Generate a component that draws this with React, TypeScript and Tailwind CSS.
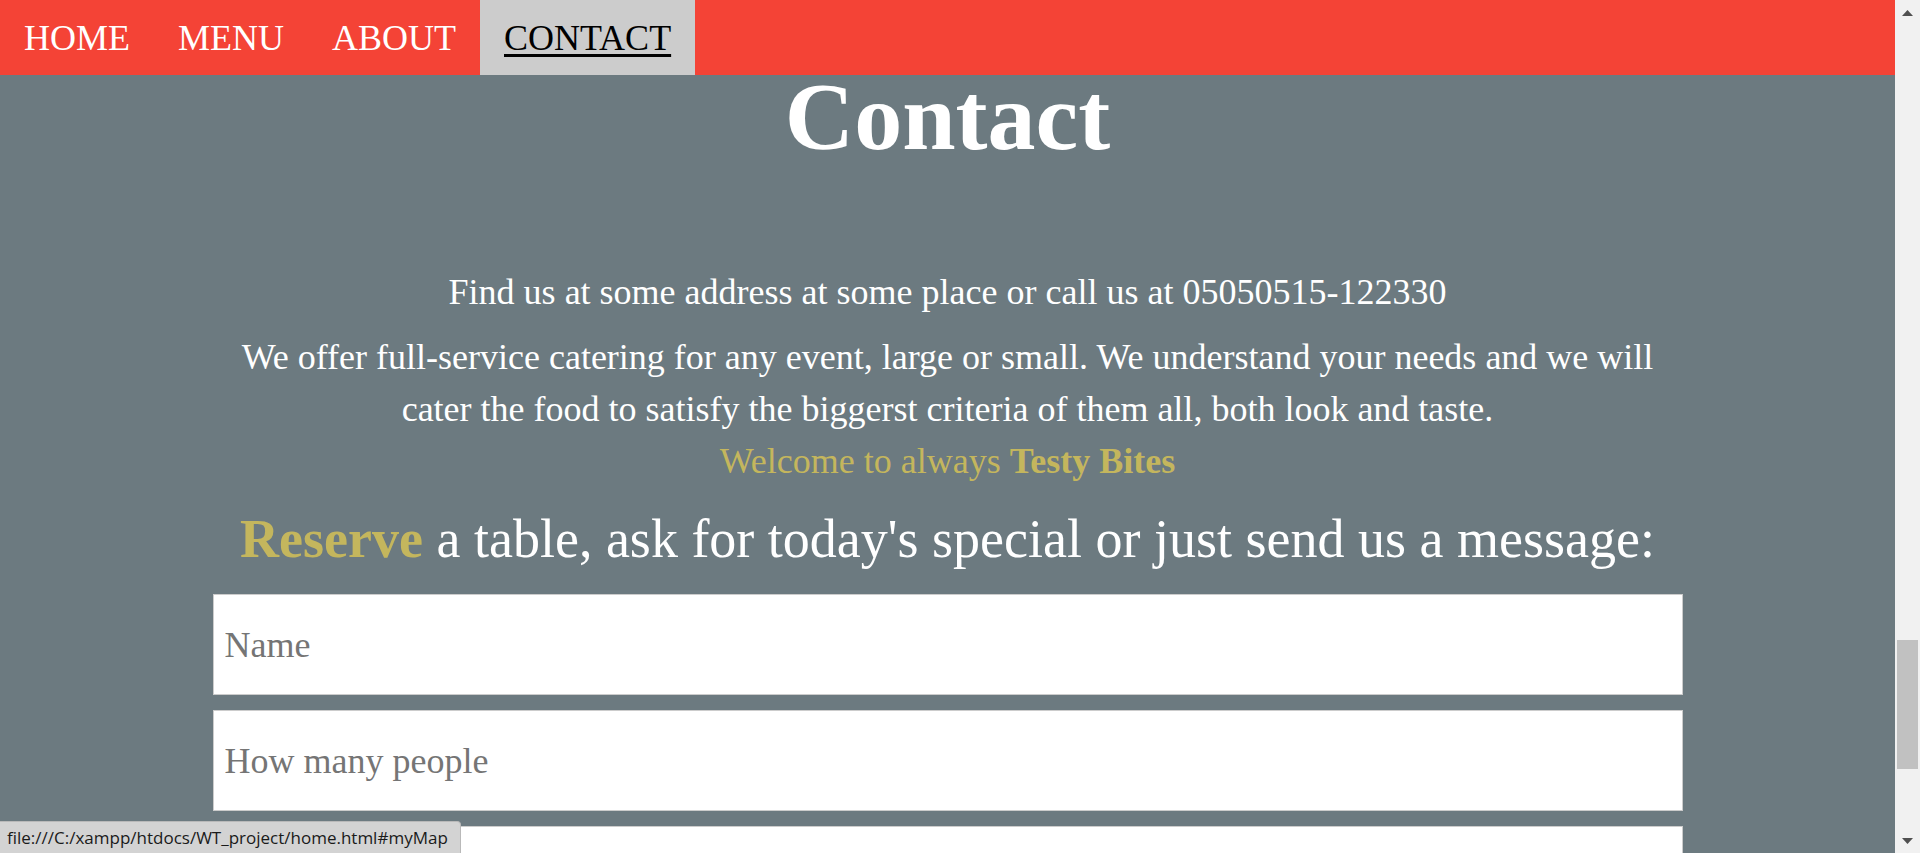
import React from "react";

const navItems = ["HOME", "MENU", "ABOUT", "CONTACT"];

function NavBar({ active }: { active: string }) {
  return (
    <nav className="flex h-[75px] shrink-0 bg-[#f44336]">
      {navItems.map((item) => (
        <a
          key={item}
          href={"#" + item.toLowerCase()}
          className={
            item === active
              ? "flex items-center bg-[#cccccc] px-[24px] text-[36px] text-black underline decoration-[3px] underline-offset-[4px]"
              : "flex items-center px-[24px] text-[36px] text-white no-underline"
          }
        >
          {item}
        </a>
      ))}
    </nav>
  );
}

function Field({ placeholder }: { placeholder: string }) {
  return (
    <input
      type="text"
      placeholder={placeholder}
      className="block h-[101px] w-full border border-[#cccccc] bg-white px-[11px] text-[36px] text-black outline-none placeholder:text-[#757575]"
    />
  );
}

function Scrollbar() {
  return (
    <div className="flex w-[25px] shrink-0 flex-col bg-[#f1f1f1]">
      <div className="flex h-[25px] items-center justify-center">
        <svg width="11" height="6" viewBox="0 0 11 6">
          <path d="M5.5 0 L11 6 L0 6 Z" fill="#505050" />
        </svg>
      </div>
      <div className="flex-1 px-[2px]">
        <div className="mt-[615px] h-[129px] w-full bg-[#c1c1c1]" />
      </div>
      <div className="flex h-[25px] items-center justify-center">
        <svg width="11" height="6" viewBox="0 0 11 6">
          <path d="M0 0 L11 0 L5.5 6 Z" fill="#505050" />
        </svg>
      </div>
    </div>
  );
}

export default function App() {
  return (
    <div className="relative flex h-[853px] w-full overflow-hidden bg-[#6c7a80] font-['Liberation_Serif',serif]">
      <div className="flex min-w-0 flex-1 flex-col">
        <NavBar active="CONTACT" />
        <main className="flex-1 overflow-hidden">
          <div className="mx-auto w-[1470px] text-center text-white">
            <h1 className="text-[96px] leading-[83px] font-bold">Contact</h1>
            <p className="mt-[108px] text-[36px] leading-[52px]">
              Find us at some address at some place or call us at 05050515-122330
            </p>
            <p className="mt-[13px] text-[36px] leading-[52px]">
              We offer full-service catering for any event, large or small. We
              understand your needs and we will cater the food to satisfy the
              biggerst criteria of them all, both look and taste.
              <br />
              <span className="text-[#c4b65d]">
                Welcome to always <b>Testy Bites</b>
              </span>
            </p>
            <p className="mt-[17px] text-[54px] leading-[70px]">
              <b className="text-[#c4b65d]">Reserve</b> a table, ask for today's
              special or just send us a message:
            </p>
            <form className="mt-[20px] flex flex-col gap-[15px] text-left">
              <Field placeholder="Name" />
              <Field placeholder="How many people" />
              <Field placeholder="Date and time" />
            </form>
          </div>
        </main>
      </div>
      <Scrollbar />
      <div className="absolute bottom-0 left-0 flex h-[32px] items-center rounded-tr-[4px] border-t border-r border-[#b9b9b9] bg-[#d3d3d3] pl-[7px] pr-[12px] font-['Open_Sans',sans-serif] text-[17px] text-[#1a1a1a]">
        file:///C:/xampp/htdocs/WT_project/home.html#myMap
      </div>
    </div>
  );
}
